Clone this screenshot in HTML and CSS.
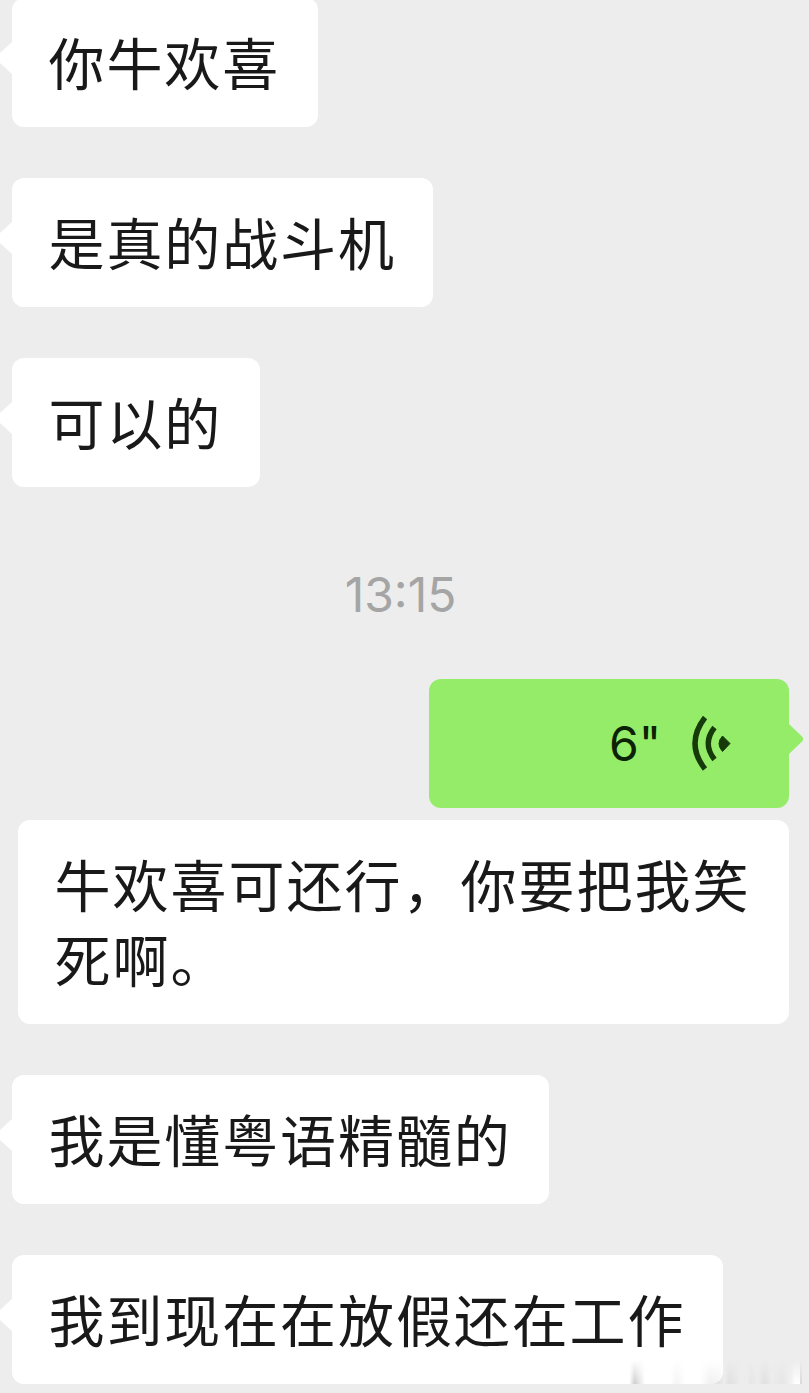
FILE: index.html
```html
<!DOCTYPE html>
<html lang="zh-CN">
<head>
    <meta charset="UTF-8">
    <title>聊天记录</title>
    <link rel="stylesheet" href="styles.css">
</head>
<body>
    <div id="chat">
        <div class="row"><p class="bubble tail">你牛欢喜</p></div>
        <div class="row"><p class="bubble tail">是真的战斗机</p></div>
        <div class="row"><p class="bubble tail">可以的</p></div>
        <div class="time">13:15</div>
        <div class="row voice-row">
            <div class="bubble voice">
                <span>6"</span>
                <svg width="42" height="60" viewBox="0 0 42 60">
                    <path d="M15 3.500Q-5 29.500 15 55" fill="none" stroke="#173a0a" stroke-width="5.400"/>
                    <path d="M24.500 13.500Q12 29.500 24.500 45.500" fill="none" stroke="#173a0a" stroke-width="5.400"/>
                    <path d="M32.500 22L40 29.500L32.500 37.500Q25.500 29.500 32.500 22Z" fill="#173a0a" stroke="#173a0a" stroke-width="1"/>
                </svg>
                <svg class="arrow" width="16" height="32" viewBox="0 0 16 32">
                    <path d="M0 0L14 13.500Q16.500 16 14 18.500L0 32Z" fill="#95ec69"/>
                </svg>
            </div>
        </div>
        <div class="row text-row"><p class="bubble long">牛欢喜可还行，你要把我笑死啊。</p></div>
        <div class="row"><p class="bubble tail">我是懂粤语精髓的</p></div>
        <div class="row"><p class="bubble tail">我到现在在放假还在工作</p></div>
        <div class="smudge"></div>
    </div>
</body>
</html>
```

FILE: styles.css
```css
*{
    margin:0;
    padding:0;
    box-sizing: border-box;
}
body{
    background: #ededed;
    font-family: "Noto Sans CJK SC", sans-serif;
    color: #191919;
}
#chat{
    width: 809px;
    height: 1393px;
    position: relative;
    overflow: hidden;
}
.row{
    display: flex;
    padding-left: 12px;
    margin-bottom: 51px;
}
.row:first-child{
    margin-top: -2px;
}
.bubble{
    position: relative;
    min-height: 129px;
    padding: 25px 37.5px 29px 36.5px;
    background: #fff;
    border-radius: 12px;
    font-size: 56px;
    line-height: 75px;
    letter-spacing: 1.9px;
    white-space: nowrap;
}
.tail:before{
    content: '';
    position: absolute;
    left: -12px;
    top: 43px;
    width: 13px;
    height: 34px;
    background: #fff;
    clip-path: polygon(100% 0, 0 35%, 0 65%, 100% 100%);
}
.time{
    margin-top: 78px;
    height: 60px;
    padding-right: 8px;
    line-height: 60px;
    text-align: center;
    font-family: Inter, sans-serif;
    font-size: 48px;
    color: #a5a5a5;
}
.voice-row{
    justify-content: flex-end;
    padding-right: 20px;
    margin-top: 54px;
    margin-bottom: 12px;
}
.voice{
    display: flex;
    justify-content: flex-end;
    align-items: center;
    width: 360px;
    padding: 0 57px 0 0;
    background: #95ec69;
    color: #0c2205;
}
.voice span{
    margin-right: 29px;
    font-family: Inter, sans-serif;
    font-size: 48px;
    letter-spacing: 0;
}
.arrow{
    position: absolute;
    right: -15px;
    top: 44px;
}
.text-row{
    padding-left: 18px;
}
.long{
    width: 771px;
    padding-right: 30px;
    letter-spacing: 2px;
    white-space: normal;
}
/* faded strip in the corner */
.smudge{
    position: absolute;
    left: 624px;
    top: 1360px;
    width: 178px;
    height: 24px;
    border-right: 2px solid #dadada;
    background: linear-gradient(90deg, transparent 0, transparent 3%, rgba(80,80,80,.28) 6%, transparent 12%, transparent 26%, rgba(150,150,150,.1) 30%, transparent 35%, transparent 43%, rgba(140,140,140,.13) 49%, rgba(140,140,140,.1) 54%, transparent 57%, rgba(130,130,130,.13) 60%, rgba(237,237,237,.4) 66%, rgba(237,237,237,.3) 70%, rgba(170,170,170,.1) 72%, transparent 76%, rgba(150,150,150,.16) 80%, transparent 84%, rgba(170,170,170,.1) 90%, rgba(255,255,255,.3) 95%, #fff 97%, #fff 100%);
    -webkit-mask-image: linear-gradient(transparent, #000);
    mask-image: linear-gradient(transparent, #000);
}
```
